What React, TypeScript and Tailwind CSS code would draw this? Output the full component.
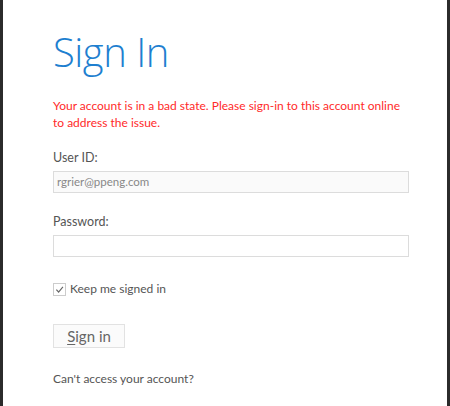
import * as React from "react";

// Windows-style sign-in dialog
export default function App() {
  return (
    <div className="w-[450px] h-[406px] bg-[#2b2b2b] flex justify-between overflow-hidden">
      <div
        className="ml-[3px] mr-[3px] min-w-0 flex-1 bg-white pl-[50px] pr-[38px] pt-[28px] text-[#555]"
        style={{ fontFamily: '"Segoe UI", Lato, "Open Sans", sans-serif' }}
      >
        <h1
          className="text-[40px] font-light leading-[48px] text-[#1e7fd0] tracking-[-0.5px]"
          style={{ fontFamily: '"Segoe UI", "Open Sans", sans-serif' }}
        >
          Sign In
        </h1>

        <p className="mt-[21px] whitespace-nowrap text-[12px] leading-[17px] text-[#ff2a2a]">
          Your account is in a bad state. Please sign-in to this account online
          <br />
          to address the issue.
        </p>

        <label className="mt-[19px] block text-[12.5px] leading-[16px]">User ID:</label>
        <div className="mt-[5px] h-[22px] w-[356px] border border-[#dcdcdc] bg-[#fafafa] px-[3px] text-[11.5px] leading-[20px] text-[#888]">
          rgrier@ppeng.com
        </div>

        <label className="mt-[21px] block text-[12.5px] leading-[16px]">Password:</label>
        <div className="mt-[5px] h-[22px] w-[356px] border border-[#dcdcdc] bg-white" />

        <div className="mt-[24px] flex items-center gap-[4px]">
          <span className="flex h-[13px] w-[13px] items-center justify-center border border-[#ccc] bg-white">
            <svg width="9" height="9" viewBox="0 0 10 10" fill="none">
              <path d="M1.5 5.2 L4 7.8 L8.8 2" stroke="#666" strokeWidth="1.3" />
            </svg>
          </span>
          <span className="text-[12px] leading-[16px]">Keep me signed in</span>
        </div>

        <button className="mt-[27px] flex h-[24px] w-[72px] items-center justify-center border border-[#e2e2e2] bg-[#fbfbfb] text-[15px] text-[#666]">
          <span className="underline decoration-1 underline-offset-2 [text-decoration-skip-ink:none]">S</span>ign in
        </button>

        <p className="mt-[23px] text-[12px] leading-[16px]">Can't access your account?</p>
      </div>
    </div>
  );
}
